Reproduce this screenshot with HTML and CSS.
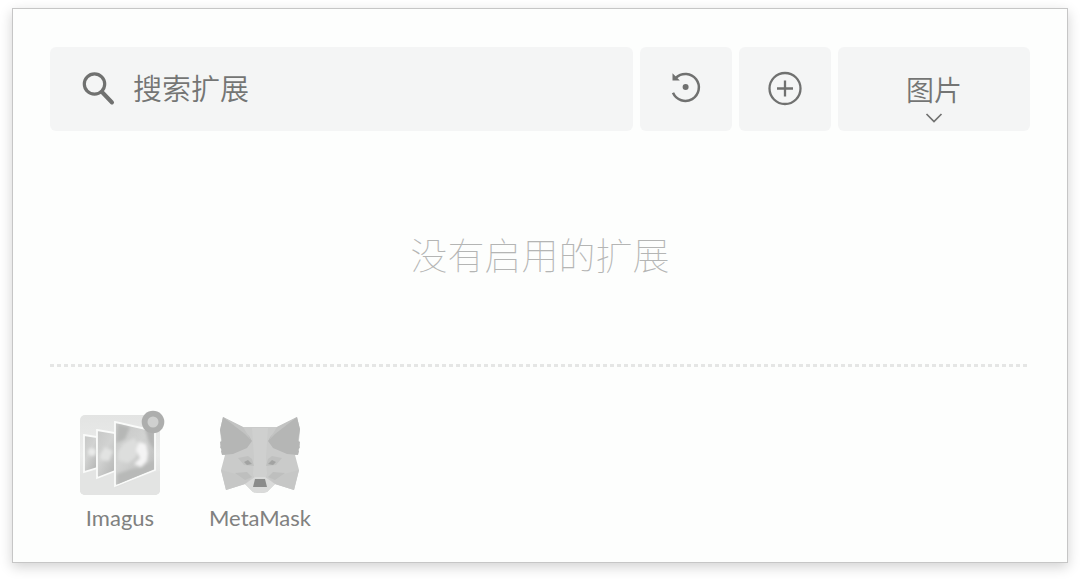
FILE: index.html
```html
<!DOCTYPE html>
<html lang="zh-CN">
<head>
<meta charset="utf-8">
<meta name="viewport" content="width=device-width, initial-scale=1">
<title>扩展</title>
<link rel="stylesheet" href="styles.css">
</head>
<body>
<main class="panel">
  <div class="toolbar">
    <label class="search">
      <svg class="search-icon" viewBox="0 0 34 34" aria-hidden="true"><circle cx="12.500" cy="12" r="10.2" fill="none" stroke="currentColor" stroke-width="3.2"/><path d="M20 20 30 30.500" fill="none" stroke="currentColor" stroke-width="4" stroke-linecap="round"/></svg>
      <input class="search-input" type="text" placeholder="搜索扩展" aria-label="搜索扩展">
    </label>
    <button class="tool" type="button" aria-label="还原">
      <svg class="tool-icon" viewBox="0 0 36 36" aria-hidden="true"><path d="M8 6.700A13.500 13.500 0 1 1 5 21.800" fill="none" stroke="currentColor" stroke-width="2.5"/><path d="M4.500 2.200V9.500h7.300L9.300 7z" fill="currentColor"/><circle cx="17.600" cy="16" r="3" fill="currentColor"/></svg>
    </button>
    <button class="tool" type="button" aria-label="添加">
      <svg class="tool-icon" viewBox="0 0 36 36" aria-hidden="true"><g fill="none" stroke="currentColor" stroke-width="2.3"><circle cx="18" cy="17.500" r="15.5"/><path d="M18 9.500v16M10 17.500h16"/></g></svg>
    </button>
    <div class="group">
      <select class="group-select" aria-label="分组"><option>图片</option></select>
      <svg class="chevron" viewBox="0 0 18 10" aria-hidden="true"><path d="m1.500 1 7.500 7.500L16.500 1" fill="none" stroke="currentColor" stroke-width="1.700"/></svg>
    </div>
  </div>
  <p class="empty">没有启用的扩展</p>
  <div class="divider"></div>
  <ul class="extensions">
    <li class="extension">
      <div class="icon-box">
        <svg class="icon" viewBox="0 0 80 80" aria-hidden="true">
          <defs>
            <linearGradient id="tile" x2="0" y2="1"><stop offset="0" stop-color="#e3e4e3"/><stop offset=".5" stop-color="#ebeceb"/><stop offset="1" stop-color="#dcdddc"/></linearGradient>
            <linearGradient id="photo" x2=".7" y2="1"><stop offset="0" stop-color="#c6c7c6"/><stop offset=".5" stop-color="#d2d3d2"/><stop offset="1" stop-color="#b9bab9"/></linearGradient>
            <filter id="soft" x="-30%" y="-30%" width="160%" height="160%"><feGaussianBlur stdDeviation="1.8"/></filter>
            <clipPath id="front"><path d="M36 8 74 17v37L36 70z"/></clipPath>
          </defs>
          <rect width="80" height="80" rx="5" fill="url(#tile)"/>
          <path d="m35 73 40-16 5-1v19a5 5 0 0 1-5 5H5a5 5 0 0 1-5-5V60l5-2 12-3v10l18-6z" fill="#e3e4e3"/>
          <g fill="url(#photo)" stroke="#fafbfa" stroke-width="1.8">
            <path d="m4 20 13 2v31L4 57z"/><path d="m17 15 18 3v38l-18 7z"/><path d="m35 7 40 9v39L35 71z"/>
          </g>
          <g filter="url(#soft)"><circle cx="12" cy="37" r="4" fill="#e9eae9"/><path d="m20 40 5-8 8 4-4 10-8-1z" fill="#e2e3e2"/></g>
          <g clip-path="url(#front)"><g filter="url(#soft)"><path d="m38 9 12 3-5 12-9 4z" fill="#b6b7b6"/><path d="m65 14 10 2v20l-6-9z" fill="#b3b4b3"/><path d="m38 37 5-8 11-6 6 9-5 11-7 5-10-3z" fill="#dddedd"/><path d="m56 35 3-8 7 2 2 9-1 8-6 6-7-3 6-6z" fill="#f4f4f4"/><path d="m37 59 15-5 8-1 15-8v11L37 72z" fill="#b8b9b8"/></g></g>
        </svg>
        <svg class="badge" viewBox="0 0 24 24" aria-hidden="true"><circle cx="12" cy="12" r="11.300" fill="#adaead"/><circle cx="12" cy="12" r="5.500" fill="#cfd0cf"/></svg>
      </div>
      <span class="name">Imagus</span>
    </li>
    <li class="extension">
      <div class="icon-box">
        <svg class="icon" viewBox="0 0 80 80" aria-hidden="true">
          <path d="m3 2 20 10h34L77 2l3 13-1 10 1 5-2 9-3 1 4 15-5 20-19-6-8 8q-7 2-14 0l-8-8-19 6-5-20 4-15-3-1-2-9 1-5-1-10z" fill="#cacbca"/>
          <path d="m3 2 14 9 12 10 3 5-5 7-14 6-11 1-1-4 1-1-2-3 1-1-1-4 2-1L0 15zM77 2 63 11 51 21l-3 5 5 7 14 6 11 1 1-4-1-1 2-3-1-1 1-4-2-1 2-12z" fill="#b5b6b5"/>
          <path d="m3 2 20 10 8 13-6-6zM77 2 57 12l-8 13 6-6z" fill="#c2c3c2"/>
          <path d="m32 13 2 29-1 17 2 6h10l2-6-1-17 2-29z" fill="#cfd0cf"/>
          <path d="m18 43 10-2 4 3 2 7-10-1zM62 43l-10-2-4 3-2 7 10-1z" fill="#bfc0bf"/>
          <path d="m24 47 4-2 4 4-5 1zM56 47l-4-2-4 4 5 1z" fill="#a2a3a2"/>
          <path d="m1 55 15 4 16 3-7 7-19 6zM79 55l-15 4-16 3 7 7 19 6z" fill="#c6c7c6"/>
          <path d="m15 58 12-1 5 5-7 3zM65 58l-12-1-5 5 7 3z" fill="#bebfbe"/>
          <path d="m25 69 10-7h10l10 7-8 8q-7 2-14 0z" fill="#dadbda"/>
          <path d="M35 64h10l2 8H33z" fill="#8b8c8b"/>
        </svg>
      </div>
      <span class="name">MetaMask</span>
    </li>
  </ul>
</main>
</body>
</html>
```
FILE: styles.css
```css
* {
  box-sizing: border-box;
}

body {
  margin: 0;
  padding: 8px 12px 16px;
  background: #fff;
  color: #707170;
  font-family: Lato, "Noto Sans CJK SC", sans-serif;
}

.panel {
  padding: 38px 37px 28px;
  border: 1px solid #c6c6c6;
  background: #fdfefd;
  box-shadow: 0 4px 12px rgba(0, 0, 0, 0.18);
}

.toolbar {
  display: grid;
  grid-template-columns: minmax(0, 1fr) 92px 92px 192px;
  gap: 7px;
  height: 84px;
}

.search,
.tool,
.group-select {
  border: 0;
  border-radius: 6px;
  background: #f4f5f5;
  color: #707170;
}

.search {
  display: flex;
  align-items: center;
  gap: 17px;
  padding: 0 32px;
}

.search-icon {
  flex: none;
  width: 34px;
  height: 34px;
}

.search-input {
  flex: 1;
  min-width: 0;
  padding: 0 0 5px;
  border: 0;
  outline: 0;
  background: none;
  color: inherit;
  font: 350 29px/40px "Noto Sans CJK SC", sans-serif;
}

.search-input::placeholder {
  color: #747574;
  opacity: 1;
}

.tool {
  display: grid;
  place-items: center;
  padding: 0;
}

.tool-icon {
  width: 36px;
  height: 36px;
}

.group {
  position: relative;
}

.group-select {
  width: 100%;
  height: 100%;
  padding: 0;
  appearance: none;
  color: #747574;
  font: 350 28px/40px "Noto Sans CJK SC", sans-serif;
  text-align: center;
  text-align-last: center;
}

.chevron {
  position: absolute;
  bottom: 8px;
  left: calc(50% - 9px);
  width: 18px;
  height: 10px;
  pointer-events: none;
}

.empty {
  margin: 95px 0 82px;
  color: #b4b5b4;
  font: 100 37px/56px "Noto Sans CJK SC", sans-serif;
  text-align: center;
}

.divider {
  height: 3px;
  background: repeating-linear-gradient(90deg, #e5e6e5 0 4px, transparent 4px 7px);
}

.extensions {
  display: flex;
  margin: 48px 0 0;
  padding: 0;
  list-style: none;
}

.extension {
  display: flex;
  flex-direction: column;
  align-items: center;
  gap: 7px;
  width: 140px;
}

.icon-box {
  position: relative;
  width: 80px;
  height: 80px;
}

.icon {
  display: block;
  width: 80px;
  height: 80px;
}

.badge {
  position: absolute;
  top: -5px;
  right: -5px;
  width: 24px;
  height: 24px;
}

.name {
  color: #808180;
  font-size: 22px;
  line-height: 32px;
}
```
